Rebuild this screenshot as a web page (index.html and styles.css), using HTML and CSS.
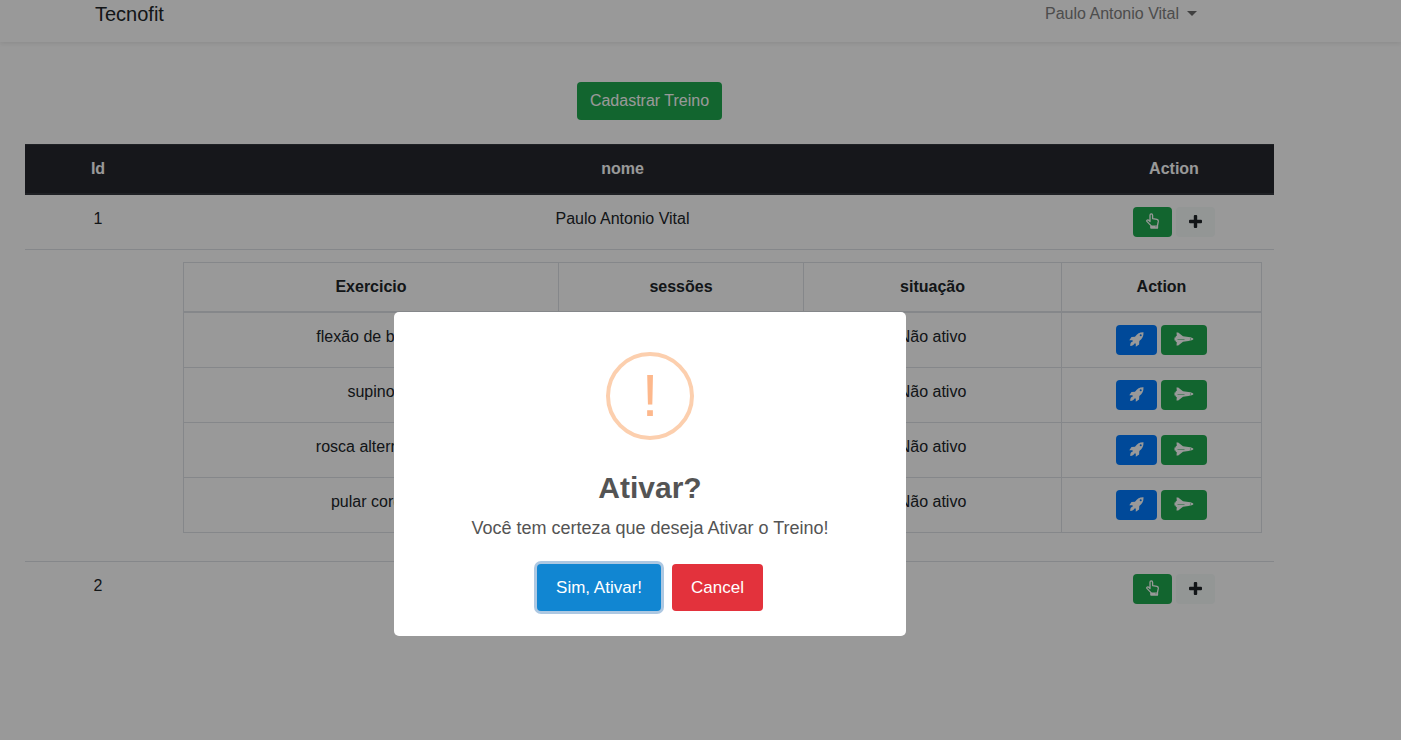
FILE: index.html
```html
<!DOCTYPE html>
<html lang="pt-BR">
<head>
<meta charset="utf-8">
<title>Tecnofit</title>
<link rel="stylesheet" href="styles.css">
</head>
<body>
<svg class="sprite" aria-hidden="true">
  <symbol id="hand" viewBox="0 0 13 16"><path d="M4 8.500V2.200a1.300 1.300 0 0 1 2.600 0v3.400l4.300.8c1 .3 1.500.9 1.400 2l-.8 3.900v2.500H5v-2.200L2.800 10.400.9 8.400c-.5-1 .5-2 1.500-1.300z" fill="none" stroke="currentColor" stroke-width="1.300" stroke-linejoin="round"/><path fill-rule="evenodd" d="M4.500 12.500h7.500v3H4.500zM9.500 13.500v1h1v-1z" fill="currentColor"/></symbol>
  <symbol id="plus" viewBox="0 0 13 13"><path d="M5.800 0h1.400q1 0 1 1v3.800H12q1 0 1 1v1.400q0 1-1 1H8.200V12q0 1-1 1H5.800q-1 0-1-1V8.200H1q-1 0-1-1V5.800q0-1 1-1h3.800V1q0-1 1-1z" fill="currentColor"/></symbol>
  <symbol id="rocket" viewBox="0 0 15 15"><path fill-rule="evenodd" d="M14.500.3C10.500.2 8.500 1.500 6 4.800L2.500 5 .3 8.300l3.200-.1.300 1.300C1.800 9.800 1 12 1.300 14c2 .1 3.400-.9 4.200-2.400l1.300-.2v3.400l3.300-2.400.2-3.400c3-2.300 4.400-4.600 4.200-8.700zM11.700 2.300a1 1 0 1 1 0 2 1 1 0 0 1 0-2z" fill="currentColor"/></symbol>
  <symbol id="shuttle" viewBox="0 0 20 14"><path d="M2.500.5h1.700L9 4.200l5.500.9c2.500.3 4.500 1 5 1.900-.5.900-2.500 1.600-5 1.900L9 9.800l-4.800 3.700H2.500l.3-3.300-1-.4L1.500 8.500H.5v-3h1l.3-1.300 1-.4z" fill="currentColor"/><path d="M3.500 7.500h7M16.500 6.200v1.600" fill="none" stroke="#1fa84f" stroke-width=".5"/></symbol>
</svg>
<div class="page">
  <nav class="navbar">
    <div class="container">
      <a class="brand" href="#">Tecnofit</a>
      <a class="user" href="#">Paulo Antonio Vital <span class="caret"></span></a>
    </div>
  </nav>
  <main class="content">
    <button class="btn btn-green" type="button">Cadastrar Treino</button>
    <table class="table">
      <colgroup><col class="c-id"><col><col class="c-action"></colgroup>
      <thead><tr><th>Id</th><th>nome</th><th>Action</th></tr></thead>
      <tbody>
        <tr><td>1</td><td>Paulo Antonio Vital</td>
          <td><div class="actions"><button class="btn-sm btn-green" type="button" aria-label="Ativar"><svg class="i-hand"><use href="#hand"/></svg></button><button class="btn-sm btn-light" type="button" aria-label="Adicionar"><svg class="i-plus"><use href="#plus"/></svg></button></div></td></tr>
        <tr><td></td><td colspan="2">
          <table class="table bordered">
            <colgroup><col class="n-ex"><col class="n-ses"><col class="n-sit"><col></colgroup>
            <thead><tr><th>Exercicio</th><th>sessões</th><th>situação</th><th>Action</th></tr></thead>
            <tbody>
              <tr><td>flexão de braço</td><td></td><td>Não ativo</td><td><div class="actions"><button class="btn-sm btn-blue" type="button" aria-label="Iniciar"><svg class="i-rocket"><use href="#rocket"/></svg></button><button class="btn-sm btn-green" type="button" aria-label="Pular"><svg class="i-shuttle"><use href="#shuttle"/></svg></button></div></td></tr>
              <tr><td>supino</td><td></td><td>Não ativo</td><td><div class="actions"><button class="btn-sm btn-blue" type="button" aria-label="Iniciar"><svg class="i-rocket"><use href="#rocket"/></svg></button><button class="btn-sm btn-green" type="button" aria-label="Pular"><svg class="i-shuttle"><use href="#shuttle"/></svg></button></div></td></tr>
              <tr><td>rosca alternada</td><td></td><td>Não ativo</td><td><div class="actions"><button class="btn-sm btn-blue" type="button" aria-label="Iniciar"><svg class="i-rocket"><use href="#rocket"/></svg></button><button class="btn-sm btn-green" type="button" aria-label="Pular"><svg class="i-shuttle"><use href="#shuttle"/></svg></button></div></td></tr>
              <tr><td>pular corda</td><td></td><td>Não ativo</td><td><div class="actions"><button class="btn-sm btn-blue" type="button" aria-label="Iniciar"><svg class="i-rocket"><use href="#rocket"/></svg></button><button class="btn-sm btn-green" type="button" aria-label="Pular"><svg class="i-shuttle"><use href="#shuttle"/></svg></button></div></td></tr>
            </tbody>
          </table>
        </td></tr>
        <tr><td>2</td><td></td>
          <td><div class="actions"><button class="btn-sm btn-green" type="button" aria-label="Ativar"><svg class="i-hand"><use href="#hand"/></svg></button><button class="btn-sm btn-light" type="button" aria-label="Adicionar"><svg class="i-plus"><use href="#plus"/></svg></button></div></td></tr>
      </tbody>
    </table>
  </main>
</div>
<div class="overlay">
  <div class="modal" role="dialog" aria-modal="true" aria-labelledby="modal-title">
    <div class="warning">!</div>
    <h2 id="modal-title">Ativar?</h2>
    <p>Você tem certeza que deseja Ativar o Treino!</p>
    <div class="modal-actions">
      <button class="confirm" type="button">Sim, Ativar!</button>
      <button class="cancel" type="button">Cancel</button>
    </div>
  </div>
</div>
</body>
</html>
```
FILE: styles.css
```css
* { box-sizing: border-box; }
body {
  margin: 0;
  background: #fff;
  color: #212529;
  font: 16px/24px "Liberation Sans", Arial, sans-serif;
}
.sprite { display: none; }
button { font-family: inherit; border: 0; cursor: pointer; }
a { text-decoration: none; }
.navbar {
  padding: 0 101px 13px 0;
  box-shadow: 0 2px 4px rgba(0, 0, 0, .075);
}
.container {
  display: flex;
  align-items: flex-start;
  justify-content: space-between;
  max-width: 1140px;
  margin: 0 auto;
  padding: 0 23px 0 15px;
}
.brand { color: #212529; font-size: 20px; line-height: 29px; }
.user { display: flex; align-items: center; gap: 8px; color: #808080; line-height: 27px; }
.caret { border: 5px solid transparent; border-top-color: #6c6c6c; border-bottom: 0; }
.content {
  display: flex;
  flex-direction: column;
  align-items: center;
  gap: 24px;
  padding: 40px 127px 0 25px;
}
.btn { height: 38px; padding: 0 13px; border-radius: 4px; font-size: 16px; }
.btn-green { background: #1fa84f; color: #fff; }
.btn-blue { background: #007bff; color: #fff; }
.btn-light { background: #f5faf9; color: #212529; }
.btn-sm {
  display: flex;
  align-items: center;
  height: 30px;
  padding: 0 13px 2px;
  border-radius: 4px;
}
.actions { display: flex; justify-content: center; gap: 4px; }
.i-hand { width: 13px; height: 16px; }
.i-plus { width: 13px; height: 13px; }
.i-rocket { width: 15px; height: 15px; }
.i-shuttle { width: 20px; height: 14px; }
.table {
  width: 100%;
  table-layout: fixed;
  border-collapse: collapse;
  text-align: center;
}
.table th, .table td { padding: 12px; vertical-align: top; border-top: 1px solid #dee2e6; }
.table thead th { border-bottom: 2px solid #dee2e6; }
.table > thead { background: #25272d; color: #fff; }
.table > thead th { border-color: #34373f; }
.c-id { width: 146px; }
.c-action { width: 200px; }
.table.bordered { margin-bottom: 16px; }
.table.bordered th, .table.bordered td { border: 1px solid #dee2e6; }
.table.bordered thead { background: none; color: inherit; }
.table.bordered thead th { border-bottom-width: 2px; }
.n-ex { width: 375px; }
.n-ses { width: 245px; }
.n-sit { width: 258px; }
.overlay {
  position: fixed;
  inset: 0;
  display: flex;
  align-items: flex-start;
  justify-content: center;
  padding: 312px 101px 0 0;
  background: rgba(0, 0, 0, .4);
}
.modal {
  display: flex;
  flex-direction: column;
  align-items: center;
  width: 512px;
  padding: 40px 20px 25px;
  border-radius: 5px;
  background: #fff;
  color: #545454;
  text-align: center;
}
.warning {
  width: 88px;
  height: 88px;
  border: 4px solid #fccfae;
  border-radius: 50%;
  color: #fdb88c;
  font-size: 60px;
  line-height: 80px;
}
.modal h2 { margin: 30px 0 10px; font-size: 30px; line-height: 36px; }
.modal p { margin: 0 0 24px; font-size: 18px; line-height: 24px; }
.modal-actions { display: flex; gap: 11px; }
.modal-actions button {
  height: 47px;
  padding: 0 19px;
  border-radius: 4px;
  color: #fff;
  font-size: 17px;
}
.modal-actions .confirm { background: #1186d2; box-shadow: 0 0 0 3px #adc8e2; }
.modal-actions .cancel { background: #e3323c; }
```
